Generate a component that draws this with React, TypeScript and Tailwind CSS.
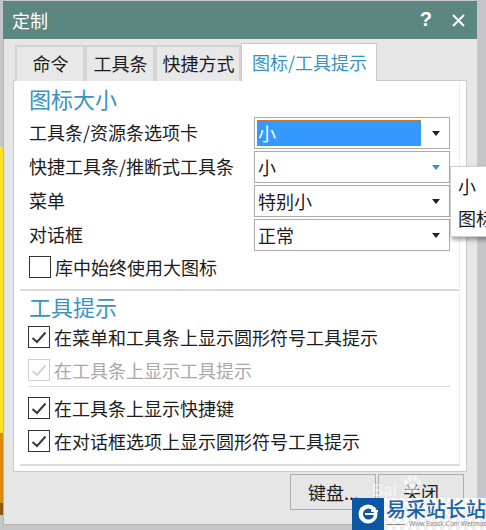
const font = "[font-family:'Noto_Sans_CJK_SC','Liberation_Sans',sans-serif]";

function Combo({ value, selected, hover }: { value: string; selected?: boolean; hover?: boolean }) {
  return (
    <div className="flex h-[32px] w-[196px] items-center border border-[#ababab] bg-white pl-[2px] pr-[9px]">
      {selected ? (
        <div className="flex h-[26px] w-[164px] items-center border border-dotted border-[#c77b2e] bg-[#3399ff] text-white">
          {value}
        </div>
      ) : (
        <div className="pl-[1px]">{value}</div>
      )}
      <svg className="ml-auto" width="8" height="5" viewBox="0 0 8 5">
        <path d="M0 0h8L4 5z" fill={hover ? "#3a8fc0" : "#222"} />
      </svg>
    </div>
  );
}

function Check({ label, checked = true, disabled }: { label: string; checked?: boolean; disabled?: boolean }) {
  return (
    <div className={`flex h-[22px] items-center gap-[4px] ${disabled ? "text-[#a9a9a9]" : "text-[#1c1c1c]"}`}>
      <div className={`flex h-[22px] w-[22px] shrink-0 items-center justify-center border ${disabled ? "border-[#cfcfcf]" : "border-[#333]"} bg-white`}>
        {checked && (
          <svg width="16" height="13" viewBox="0 0 16 13" fill="none">
            <path d="M1.5 7l4.5 4L14.5 1.5" stroke={disabled ? "#d2d2d2" : "#3a3a3a"} strokeWidth="2" />
          </svg>
        )}
      </div>
      <span className="whitespace-nowrap">{label}</span>
    </div>
  );
}

function Row({ label, children }: { label: string; children: React.ReactNode }) {
  return (
    <div className="flex h-[32px] items-center justify-between pl-[9px] pr-[9px]">
      <span className="pb-[2px]">{label}</span>
      {children}
    </div>
  );
}

export default function App() {
  return (
    <div className={`${font} relative h-[530px] w-[486px] overflow-hidden bg-[#c6c6c8] text-[18px] leading-[24px] text-[#1c1c1c]`}>
      {/* desktop behind the dialog */}
      <div className="absolute left-0 top-[147px] h-[286px] w-[3px] bg-[#ffe11f]" />
      <div className="absolute left-0 top-[433px] h-[70px] w-[3px] bg-[#dd8a0a]" />
      <div className="absolute left-0 top-[503px] h-[12px] w-[3px] bg-[#8a5a10]" />

      <div className="absolute left-[3px] top-[1px] flex h-[524px] w-[474px] flex-col border-b border-l border-[#b5b5b5] bg-[#e6e6e6]">
        <div className="-ml-px flex h-[38px] shrink-0 items-center bg-[#5c8680] pl-[9px] pr-[12px] text-white">
          <span>定制</span>
          <span className="ml-auto mr-[20px] pb-[3px] text-[20px] font-bold [font-family:'Liberation_Sans',sans-serif]">?</span>
          <svg width="13" height="13" viewBox="0 0 13 13" stroke="white" strokeWidth="2">
            <path d="M1 1l11 11M12 1L1 12" />
          </svg>
        </div>

        <div className="relative z-10 ml-[11px] mt-[4px] flex h-[38px] shrink-0 items-end">
          <div className="flex h-[36px] w-[70px] items-center justify-center border-2 border-b-0 border-[#d3d3d3] bg-[#e8e8e8] pb-[3px] pl-[1px]">命令</div>
          <div className="flex h-[36px] w-[70px] items-center justify-center border-2 border-b-0 border-[#d3d3d3] bg-[#e8e8e8] pb-[3px] pl-[1px]">工具条</div>
          <div className="flex h-[36px] w-[86px] items-center justify-center whitespace-nowrap border-2 border-b-0 border-[#d3d3d3] bg-[#e8e8e8] pb-[3px] pl-[1px]">快捷方式</div>
          <div className="flex h-[38px] w-[136px] items-center justify-center whitespace-nowrap border border-b-0 border-[#c9c9c9] bg-white pb-[2px] pl-[1px] text-[#3a93c4]">图标/工具提示</div>
        </div>

        <div className="ml-[9px] mt-[-1px] flex h-[392px] w-[454px] flex-col border border-[#c9c9c9] bg-white pl-[6px] pr-[6px] pt-[1px]">
          <div className="h-[209px] shrink-0 border-b-2 border-r border-[#dcdcdc] border-r-[#ececec]">
            <div className="h-[35px] pl-[9px] text-[22px] leading-[32px] text-[#3a93c4]">图标大小</div>
            <div className="flex flex-col gap-[2px]">
              <Row label="工具条/资源条选项卡"><Combo value="小" selected /></Row>
              <Row label="快捷工具条/推断式工具条"><Combo value="小" hover /></Row>
              <Row label="菜单"><Combo value="特别小" /></Row>
              <Row label="对话框"><Combo value="正常" /></Row>
            </div>
            <div className="ml-[9px] mt-[5px]">
              <Check label="库中始终使用大图标" checked={false} />
            </div>
          </div>
          <div className="mt-[2px] h-[173px] shrink-0 border-b-2 border-r border-[#dcdcdc] border-r-[#ececec]">
            <div className="h-[32px] pl-[9px] text-[22px] leading-[26px] text-[#3a93c4]">工具提示</div>
            <div className="ml-[8px] mt-[1px] flex flex-col gap-[11px]">
              <Check label="在菜单和工具条上显示圆形符号工具提示" />
              <Check label="在工具条上显示工具提示" disabled />
            </div>
            <div className="ml-[9px] mr-[9px] mt-[5px] border-t border-[#dcdcdc]" />
            <div className="ml-[8px] mt-[10px] flex flex-col gap-[11px]">
              <Check label="在工具条上显示快捷键" />
              <Check label="在对话框选项上显示圆形符号工具提示" />
            </div>
          </div>
        </div>

        <div className="ml-[286px] mt-[2px] flex gap-[2px]">
          <div className="flex h-[36px] w-[86px] items-center justify-center border border-[#adadad] pl-[1px]">键盘...</div>
          <div className="flex h-[36px] w-[86px] items-center justify-center border border-[#adadad]">关闭</div>
        </div>
      </div>

      {/* open combo popup */}
      <div className="absolute left-[450px] top-[166px] flex h-[71px] w-[60px] flex-col gap-[8px] border border-[#d0d0d0] bg-white pl-[7px] pt-[7px] shadow-[2px_3px_4px_rgba(0,0,0,0.35)]">
        <span>小</span>
        <span className="whitespace-nowrap">图标</span>
      </div>

      {/* faint baidu watermark over the buttons */}
      <svg className="absolute left-[401px] top-[474px] opacity-60" width="22" height="22" viewBox="0 0 22 22" fill="#ffffff">
        <ellipse cx="11" cy="15" rx="6" ry="5" />
        <ellipse cx="5" cy="8" rx="2" ry="3" />
        <ellipse cx="9" cy="4" rx="2" ry="3" />
        <ellipse cx="14" cy="4" rx="2" ry="3" />
        <ellipse cx="18" cy="8" rx="2" ry="3" />
      </svg>
      <span className="absolute left-[372px] top-[479px] text-[16px] font-bold text-white/50 [font-family:'Liberation_Sans',sans-serif]">Bai</span>

      {/* site logo */}
      <div className="absolute left-[352px] top-[498px] flex h-[32px] w-[134px] bg-white bg-[repeating-conic-gradient(#eeeeee_0_25%,#ffffff_0_50%)] bg-[length:8px_8px]">
        <div className="flex h-[32px] w-[32px] shrink-0 items-center justify-center bg-[#0b57a4]">
          <svg width="20" height="20" viewBox="0 0 20 20">
            <circle cx="10" cy="10" r="9.5" fill="white" />
            <circle cx="10.5" cy="10" r="5.5" fill="#0b57a4" />
            <path d="M7 10h11" stroke="white" strokeWidth="2" />
            <path d="M13 6h7v2h-7z" fill="white" />
          </svg>
        </div>
        <div className="ml-[2px] flex flex-col">
          <span className="whitespace-nowrap text-[20px] font-medium leading-[22px] text-[#1b62a8]">易采站长站</span>
          <div className="flex items-center gap-[4px]">
            <div className="h-px w-[19px] bg-[#888]" />
            <span className="whitespace-nowrap text-[6.5px] leading-[8px] text-[#888] [font-family:'Liberation_Sans',sans-serif]">Www.Easck.Com Webmaster</span>
          </div>
        </div>
      </div>
    </div>
  );
}
